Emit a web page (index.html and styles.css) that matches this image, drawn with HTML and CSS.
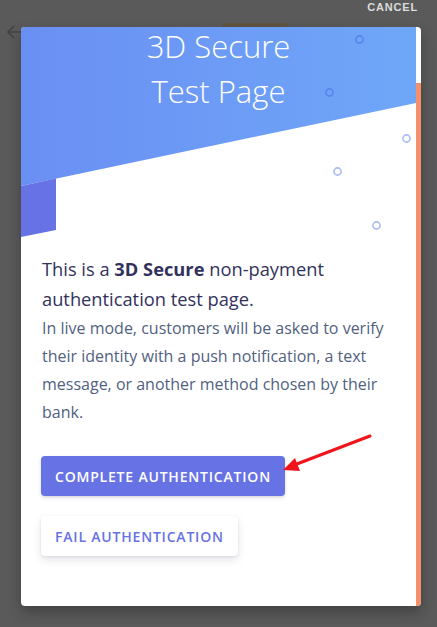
FILE: index.html
```html
<!DOCTYPE html>
<html>
<head>
<meta charset="utf-8">
<link rel="stylesheet" href="styles.css">
</head>
<body>
<div class="backdrop">
  <svg class="back-arrow" width="16" height="14" viewBox="0 0 16 14"><path d="M15 7H2M7 1L1 7l6 6" fill="none" stroke="#444" stroke-width="1.6"/></svg>
  <div class="back-chip"></div>
</div>
<div class="topbar"><span class="cancel">CANCEL</span></div>
<div class="card">
  <div class="edge"></div>
  <div class="hero">
    <svg class="hero-art" width="395" height="215" viewBox="0 0 395 215">
      <defs>
        <linearGradient id="g" x1="0" y1="0" x2="1" y2="0">
          <stop offset="0" stop-color="#6a8ff3"/>
          <stop offset="1" stop-color="#6fa7f8"/>
        </linearGradient>
      </defs>
      <polygon points="0,0 395,0 395,79 0,162" fill="url(#g)"/>
      <polygon points="0,162 35,154.5 35,206 0,213" fill="#6772e5"/>
      <circle cx="338.5" cy="15.5" r="3.6" fill="none" stroke="#5a82ee" stroke-width="1.6"/>
      <circle cx="308.5" cy="68.5" r="3.6" fill="none" stroke="#5a82ee" stroke-width="1.6"/>
      <circle cx="385.5" cy="114.5" r="3.6" fill="none" stroke="#a9bdf6" stroke-width="1.6"/>
      <circle cx="316.5" cy="147.5" r="3.6" fill="none" stroke="#a9bdf6" stroke-width="1.6"/>
      <circle cx="355.5" cy="201.5" r="3.6" fill="none" stroke="#a9bdf6" stroke-width="1.6"/>
    </svg>
    <h1 class="title">3D Secure<br>Test Page</h1>
  </div>
  <div class="content">
    <p class="lead">This is a <strong>3D Secure</strong> non-payment authentication test page.</p>
    <p class="desc">In live mode, customers will be asked to verify their identity with a push notification, a text message, or another method chosen by their bank.</p>
    <div class="actions">
      <button class="btn btn-primary">Complete authentication</button>
      <button class="btn btn-secondary">Fail authentication</button>
    </div>
  </div>
</div>
<svg class="annot" width="100" height="45" viewBox="0 0 100 45">
  <path d="M89 2 L8 33" stroke="#f0141b" stroke-width="3" stroke-linecap="round" fill="none"/>
  <polygon points="2,36 14,24 19,37" fill="#f0141b"/>
</svg>
</body>
</html>
```
FILE: styles.css
```css
html, body {
  margin: 0;
  padding: 0;
}
body {
  background: #5a5a5a;
  width: 437px;
  height: 627px;
  overflow: hidden;
  position: relative;
  font-family: "Open Sans", "Noto Sans", sans-serif;
}
.backdrop {
  position: absolute;
  left: 0;
  top: 0;
  width: 437px;
  height: 40px;
}
.back-arrow {
  position: absolute;
  left: 7px;
  top: 25px;
}
.back-chip {
  position: absolute;
  left: 222px;
  top: 23px;
  width: 66px;
  height: 10px;
  border-radius: 4px;
  background: #5f5442;
}
.topbar {
  height: 27px;
  display: flex;
  justify-content: flex-end;
  padding-right: 19px;
  box-sizing: border-box;
  position: relative;
}
.cancel {
  color: #dcdcdc;
  font-family: "Liberation Sans", Arial, sans-serif;
  font-weight: 700;
  font-size: 11px;
  letter-spacing: 0.8px;
  line-height: 15px;
}
.card {
  position: relative;
  margin-left: 21px;
  width: 400px;
  height: 579px;
  background: #fff;
  border-radius: 4px;
  overflow: hidden;
  box-shadow: 0 6px 14px rgba(0,0,0,0.28);
}
.edge {
  position: absolute;
  right: 0;
  top: 56px;
  bottom: 0;
  width: 5px;
  background: #f5916a;
}
.hero {
  position: relative;
  height: 213px;
}
.hero-art {
  position: absolute;
  left: 0;
  top: 0;
}
.title {
  position: relative;
  margin: 0;
  width: 395px;
  text-align: center;
  color: #fff;
  font-weight: 300;
  font-size: 31px;
  line-height: 45px;
  margin-top: -3px;
}
.content {
  padding: 17px 20px 0 21px;
}
.lead {
  margin: 0;
  color: #32325d;
  font-size: 18.3px;
  line-height: 30px;
  font-weight: 500;
}
.lead strong {
  font-weight: 700;
}
.desc {
  margin: 0;
  color: #525f7f;
  font-size: 16px;
  line-height: 28px;
}
.actions {
  display: flex;
  flex-direction: column;
  align-items: flex-start;
  gap: 20px;
  margin-top: 30px;
}
.btn {
  height: 40px;
  border: none;
  border-radius: 4px;
  padding: 0 14px;
  margin-left: -1px;
  font-family: "Open Sans", "Noto Sans", sans-serif;
  font-size: 14px;
  font-weight: 600;
  letter-spacing: 0.8px;
  text-transform: uppercase;
}
.btn-primary {
  background: #6772e5;
  color: #fff;
  box-shadow: 0 2px 4px rgba(50,50,93,0.12), 0 1px 2px rgba(0,0,0,0.08);
}
.btn-secondary {
  background: #fff;
  color: #6772e5;
  box-shadow: 0 4px 8px rgba(50,50,93,0.12), 0 1px 3px rgba(0,0,0,0.08);
}
.annot {
  position: absolute;
  left: 281px;
  top: 434px;
}
```
